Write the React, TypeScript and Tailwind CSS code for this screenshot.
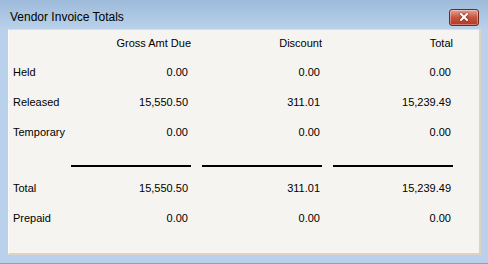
import { X } from "lucide-react";

const rows = [
  { label: "Held", gross: "0.00", discount: "0.00", total: "0.00" },
  { label: "Released", gross: "15,550.50", discount: "311.01", total: "15,239.49" },
  { label: "Temporary", gross: "0.00", discount: "0.00", total: "0.00" },
];

const totals = [
  { label: "Total", gross: "15,550.50", discount: "311.01", total: "15,239.49" },
  { label: "Prepaid", gross: "0.00", discount: "0.00", total: "0.00" },
];

function Row({ label, gross, discount, total }: { label: string; gross: string; discount: string; total: string }) {
  return (
    <div className="grid h-[30px] grid-cols-[47px_120px_120px_120px] items-center gap-x-[11px]">
      <span className="whitespace-nowrap">{label}</span>
      <span className="pr-[3px] text-right">{gross}</span>
      <span className="pr-[2px] text-right">{discount}</span>
      <span className="pr-[2px] text-right">{total}</span>
    </div>
  );
}

export default function App() {
  return (
    <div
      className="flex h-[264px] w-[488px] flex-col bg-[#b9d1ea] text-[11px] text-black"
      style={{ fontFamily: '"Liberation Sans", Arial, sans-serif' }}
    >
      {/* title bar */}
      <div className="flex h-[29px] shrink-0 items-center justify-between bg-gradient-to-b from-[#9ebbdb] to-[#b9d1ea] pl-[10px] pr-[9px] pt-[5px]">
        <span className="text-[12px]">Vendor Invoice Totals</span>
        <button className="flex h-[17px] w-[30px] items-center justify-center rounded-[3px] border border-[#6e2a22] bg-gradient-to-b from-[#e4a293] via-[#c9533f] to-[#b33a26] shadow-[inset_0_0_0_1px_rgba(255,255,255,0.35)]">
          <X size={12} strokeWidth={4} className="text-white drop-shadow-[0_0_1px_#5a1a10]" />
        </button>
      </div>

      {/* client area */}
      <div className="ml-[8px] mr-[7px] h-[226px] shrink-0 border-t border-l border-r-2 border-b-2 border-t-[#e3dbcc] border-l-[#fbfaf8] border-r-[#dcd3c2] border-b-[#dcd3c2] bg-[#f5f4f0] pl-[4px]">
        <div className="grid h-[27px] grid-cols-[47px_120px_120px_120px] items-center gap-x-[11px]">
          <span />
          <span className="text-right">Gross Amt Due</span>
          <span className="text-right">Discount</span>
          <span className="text-right">Total</span>
        </div>
        {rows.map((r) => (
          <Row key={r.label} {...r} />
        ))}
        <div className="grid h-[20px] grid-cols-[47px_120px_120px_120px] items-end gap-x-[11px]">
          <span />
          <div className="h-[2px] bg-black" />
          <div className="h-[2px] bg-black" />
          <div className="h-[2px] bg-black" />
        </div>
        <div className="h-[6px]" />
        {totals.map((r) => (
          <Row key={r.label} {...r} />
        ))}
      </div>

      <div className="flex-1" />
      <div className="h-px bg-[#3fc1e6]" />
    </div>
  );
}
